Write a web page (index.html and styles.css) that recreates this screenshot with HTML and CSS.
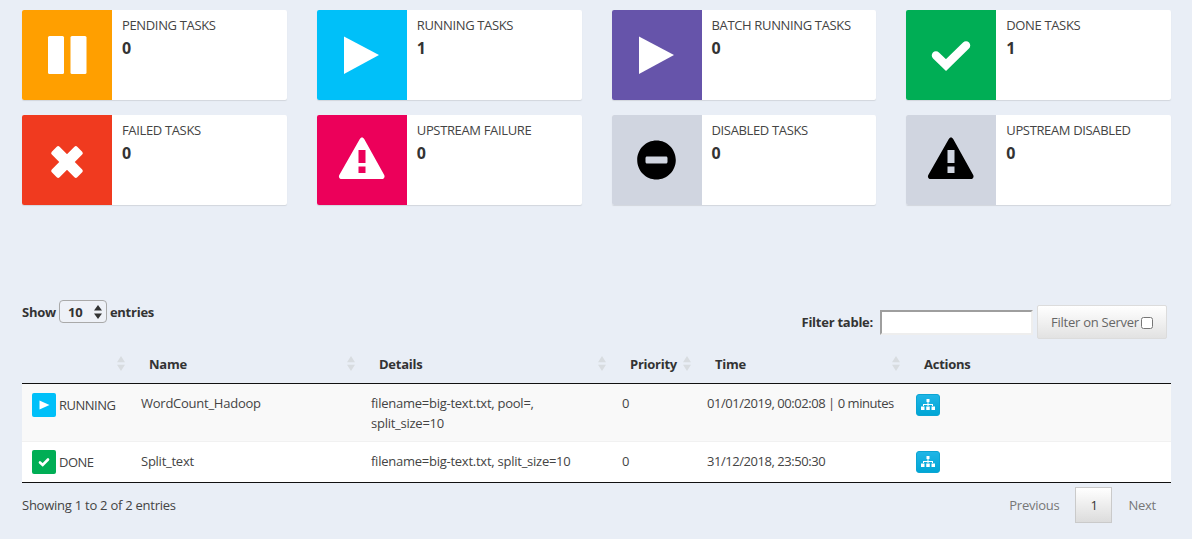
FILE: index.html
```html
<!DOCTYPE html>
<html lang="en">
<head>
    <meta charset="UTF-8">
    <title>Task list</title>
    <link rel="stylesheet" href="styles.css">
</head>
<body>

    <div class="cards">
        <div class="card">
            <div class="card-icon bg-pending">
                <svg viewBox="0 0 50 50"><rect x="6" y="6" width="16" height="38" rx="1.5"/><rect x="28.500" y="6" width="16" height="38" rx="1.5"/></svg>
            </div>
            <div class="card-body"><div class="card-title">PENDING TASKS</div><div class="card-count">0</div></div>
        </div>
        <div class="card">
            <div class="card-icon bg-running">
                <svg viewBox="0 0 50 50"><path d="M7 6.500 42 25 7 44z"/></svg>
            </div>
            <div class="card-body"><div class="card-title">RUNNING TASKS</div><div class="card-count">1</div></div>
        </div>
        <div class="card">
            <div class="card-icon bg-batch">
                <svg viewBox="0 0 50 50"><path d="M7 6.500 42 25 7 44z"/></svg>
            </div>
            <div class="card-body"><div class="card-title">BATCH RUNNING TASKS</div><div class="card-count">0</div></div>
        </div>
        <div class="card">
            <div class="card-icon bg-done">
                <svg viewBox="0 0 50 50"><path class="check" d="M10 25.500 20 35 40 15.500"/></svg>
            </div>
            <div class="card-body"><div class="card-title">DONE TASKS</div><div class="card-count">1</div></div>
        </div>
        <div class="card">
            <div class="card-icon bg-failed">
                <svg viewBox="0 0 50 50"><g transform="translate(25 27) rotate(45)"><rect x="-18" y="-5.500" width="36" height="11" rx="2"/><rect x="-5.500" y="-18" width="11" height="36" rx="2"/></g></svg>
            </div>
            <div class="card-body"><div class="card-title">FAILED TASKS</div><div class="card-count">0</div></div>
        </div>
        <div class="card">
            <div class="card-icon bg-upstream">
                <svg viewBox="0 0 50 50"><path fill-rule="evenodd" d="M25 2.500c1 0 1.700.6 2.200 1.500l20 36c1 1.800-.2 4-2.200 4H4.500c-2 0-3.200-2.200-2.200-4l20.500-36c.5-.9 1.200-1.500 2.200-1.500zM21.500 15v13h7V15zM21.500 31.500V38h7v-6.500z"/></svg>
            </div>
            <div class="card-body"><div class="card-title">UPSTREAM FAILURE</div><div class="card-count">0</div></div>
        </div>
        <div class="card">
            <div class="card-icon bg-disabled dark">
                <svg viewBox="0 0 50 50"><path fill-rule="evenodd" d="M24.500 5.500c10.700 0 19.300 8.700 19.300 19.500s-8.600 19.500-19.300 19.500S5.200 35.800 5.200 25 13.800 5.500 24.500 5.500zM15 21.500c-.8 0-1.500.6-1.500 1.500v4c0 .9.700 1.500 1.500 1.500h19c.8 0 1.500-.6 1.500-1.500v-4c0-.9-.7-1.500-1.500-1.500z"/></svg>
            </div>
            <div class="card-body"><div class="card-title">DISABLED TASKS</div><div class="card-count">0</div></div>
        </div>
        <div class="card">
            <div class="card-icon bg-disabled dark">
                <svg viewBox="0 0 50 50"><path fill-rule="evenodd" d="M25 2.500c1 0 1.700.6 2.200 1.500l20 36c1 1.800-.2 4-2.200 4H4.500c-2 0-3.200-2.200-2.200-4l20.500-36c.5-.9 1.200-1.500 2.200-1.500zM21.500 15v13h7V15zM21.500 31.500V38h7v-6.500z"/></svg>
            </div>
            <div class="card-body"><div class="card-title">UPSTREAM DISABLED</div><div class="card-count">0</div></div>
        </div>
    </div>

    <div class="toolbar">
        <div class="length-control">
            <span>Show</span>
            <span class="select-wrap">
                <select class="length-select"><option>10</option></select>
                <svg class="select-arrows" viewBox="0 0 8 14"><path d="M4 0 8 5.500H0zM4 14 0 8.500h8z"/></svg>
            </span>
            <span>entries</span>
        </div>
        <div class="filter-control">
            <label class="filter-label" for="filter">Filter table:</label>
            <input class="filter-input" id="filter" type="text">
            <label class="filter-button">Filter on Server<input type="checkbox"></label>
        </div>
    </div>

    <table class="tasks">
        <thead>
            <tr>
                <th class="col-status sortable"></th>
                <th class="col-name sortable">Name</th>
                <th class="col-details sortable">Details</th>
                <th class="col-priority sortable">Priority</th>
                <th class="col-time sortable">Time</th>
                <th class="col-actions">Actions</th>
            </tr>
        </thead>
        <tbody>
            <tr class="odd">
                <td><span class="status"><span class="badge bg-running"><svg viewBox="0 0 24 24"><path d="M7.500 7.500 17.500 12 7.500 16.500z"/></svg></span>RUNNING</span></td>
                <td>WordCount_Hadoop</td>
                <td>filename=big-text.txt, pool=,<br>split_size=10</td>
                <td>0</td>
                <td class="time-cell">01/01/2019, 00:02:08 | 0 minutes</td>
                <td><button class="action-btn"><svg viewBox="0 0 14 12"><path d="M5.500 0h3v3h-3zM6.500 3h1v2h4.500v2h-1V6H7.500v1h-1V6H3v1H2V5h4.500zM0 7.500h3.500V11H0zM5.250 7.500h3.500V11h-3.500zM10.500 7.500H14V11h-3.500z"/></svg></button></td>
            </tr>
            <tr>
                <td><span class="status"><span class="badge bg-done"><svg viewBox="0 0 24 24"><path class="check-small" d="M8 12.500 10.700 15 16 9.500"/></svg></span>DONE</span></td>
                <td>Split_text</td>
                <td>filename=big-text.txt, split_size=10</td>
                <td>0</td>
                <td class="time-cell">31/12/2018, 23:50:30</td>
                <td><button class="action-btn"><svg viewBox="0 0 14 12"><path d="M5.500 0h3v3h-3zM6.500 3h1v2h4.500v2h-1V6H7.500v1h-1V6H3v1H2V5h4.500zM0 7.500h3.500V11H0zM5.250 7.500h3.500V11h-3.500zM10.500 7.500H14V11h-3.500z"/></svg></button></td>
            </tr>
        </tbody>
    </table>

    <div class="table-footer">
        <div class="table-info">Showing 1 to 2 of 2 entries</div>
        <div class="pagination">
            <a class="page-link">Previous</a>
            <a class="page-link current">1</a>
            <a class="page-link">Next</a>
        </div>
    </div>

</body>
</html>
```

FILE: styles.css
```css
* {
    box-sizing: border-box;
}
body {
    margin: 0;
    padding: 10px 21px 0 22px;
    height: 539px;
    overflow: hidden;
    background-color: #e9eef6;
    color: #333;
    font-family: "Open Sans", sans-serif;
    font-size: 13px;
    line-height: 20px;
    letter-spacing: -0.25px;
}

/* status cards */
.cards {
    display: grid;
    grid-template-columns: repeat(4, 1fr);
    column-gap: 30px;
    row-gap: 15px;
}
.card {
    display: flex;
    height: 90px;
    background-color: #fff;
    border-radius: 2px;
    box-shadow: 0 1px 1px rgba(0, 0, 0, 0.1);
    overflow: hidden;
}
.card-icon {
    display: flex;
    flex: 0 0 90px;
    align-items: center;
    justify-content: center;
}
.card-icon svg {
    width: 50px;
    height: 50px;
    fill: #fff;
}
.card-icon.dark svg {
    fill: #000;
}
.check {
    fill: none;
    stroke: #fff;
    stroke-width: 8.500px;
    stroke-linecap: round;
}
.card-body {
    padding: 4px 10px;
}
.card-title {
    color: #444;
    font-size: 13px;
    line-height: 23px;
    letter-spacing: -0.35px;
}
.card-count {
    font-size: 16px;
    font-weight: 700;
    line-height: 22px;
}
.bg-pending { background-color: #ff9f00; }
.bg-running { background-color: #00c0f9; }
.bg-batch { background-color: #6654aa; }
.bg-done { background-color: #00ae55; }
.bg-failed { background-color: #f03a1f; }
.bg-upstream { background-color: #ec005a; }
.bg-disabled { background-color: #d0d5e0; }

/* table controls */
.toolbar {
    display: flex;
    justify-content: space-between;
    align-items: flex-start;
    height: 46px;
    margin-top: 95px;
    margin-right: 4px;
}
.length-control {
    display: flex;
    align-items: center;
    gap: 3px;
    font-weight: 700;
}
.select-wrap {
    position: relative;
    display: block;
}
.length-select {
    display: block;
    width: 48px;
    height: 23px;
    padding: 0 0 0 8px;
    appearance: none;
    background: #eef1f7;
    border: 1px solid #a9a9a9;
    border-radius: 4px;
    color: #333;
    font: 700 13px "Open Sans", sans-serif;
}
.select-arrows {
    position: absolute;
    top: 5px;
    right: 5px;
    width: 8px;
    height: 14px;
    fill: #333;
}
.filter-control {
    display: flex;
    align-items: center;
    margin-top: 5px;
}
.filter-label {
    margin-right: 7px;
    font-weight: 700;
}
.filter-input {
    width: 153px;
    height: 25px;
    margin-right: 4px;
    background: #fff;
    border: 2px solid #9e9e9e;
    border-right-color: #eee;
    border-bottom-color: #eee;
}
.filter-button {
    display: flex;
    align-items: center;
    gap: 2px;
    width: 130px;
    height: 34px;
    padding-left: 13px;
    background: linear-gradient(#fff, #e2e2e2);
    border: 1px solid #dcdcdc;
    border-radius: 2px;
    color: #666;
}
.filter-button input {
    width: 12px;
    height: 12px;
    margin: 1px 0 0;
}

/* tasks table */
.tasks {
    width: 1149px;
    border-collapse: collapse;
    table-layout: fixed;
    margin-top: -1px;
}
.tasks th {
    position: relative;
    height: 38px;
    padding: 0 18px;
    border-bottom: 1px solid #111;
    font-weight: 700;
    text-align: left;
}
.tasks td {
    padding: 9px 10px 8px;
    vertical-align: top;
    color: #444;
}
.tasks tbody tr {
    border-bottom: 1px solid #f1f1f1;
}
.tasks tr.odd {
    background-color: #f9f9f9;
}
.tasks tbody tr:last-child {
    background-color: #fff;
    border-bottom: 1px solid #111;
}
.tasks tbody tr:last-child .status {
    margin-top: -1px;
}
.tasks tbody tr:last-child .action-btn {
    margin-top: 0;
}
.time-cell {
    white-space: nowrap;
    letter-spacing: -0.45px;
}
.col-status { width: 109px; }
.col-name { width: 230px; }
.col-details { width: 251px; }
.col-priority { width: 85px; }
.col-time { width: 209px; }
.sortable::after {
    content: "";
    position: absolute;
    top: 11px;
    right: 6px;
    width: 8px;
    height: 15px;
    background: #d8dce0;
    clip-path: polygon(50% 0, 100% 42%, 0 42%, 50% 0, 0 58%, 100% 58%, 50% 100%, 0 58%);
}
.status {
    display: flex;
    align-items: center;
    gap: 3px;
    letter-spacing: -0.5px;
}
.badge {
    display: block;
    width: 24px;
    height: 24px;
    border-radius: 2px;
}
.badge svg {
    display: block;
    width: 24px;
    height: 24px;
    fill: #fff;
}
.check-small {
    fill: none;
    stroke: #fff;
    stroke-width: 2.600px;
    stroke-linecap: round;
}
.action-btn {
    display: flex;
    align-items: center;
    justify-content: center;
    width: 24px;
    height: 22px;
    margin-top: 1px;
    padding: 0;
    background: linear-gradient(#1fb5e6, #00a6d5);
    border: 1px solid #0ba5d3;
    border-radius: 3px;
}
.action-btn svg {
    width: 14px;
    height: 12px;
    fill: #fff;
}

/* footer */
.table-footer {
    display: flex;
    justify-content: space-between;
    margin-right: 2px;
    padding-top: 4px;
}
.table-info {
    padding-top: 8px;
    color: #444;
}
.pagination {
    display: flex;
}
.page-link {
    padding: 8px 13px 0;
    height: 36px;
    color: #777;
    line-height: 20px;
}
.page-link.current {
    width: 37px;
    margin: 0 3px;
    padding-top: 7px;
    background: linear-gradient(#fff, #dcdcdc);
    border: 1px solid #cacaca;
    color: #333;
    text-align: center;
}
```
